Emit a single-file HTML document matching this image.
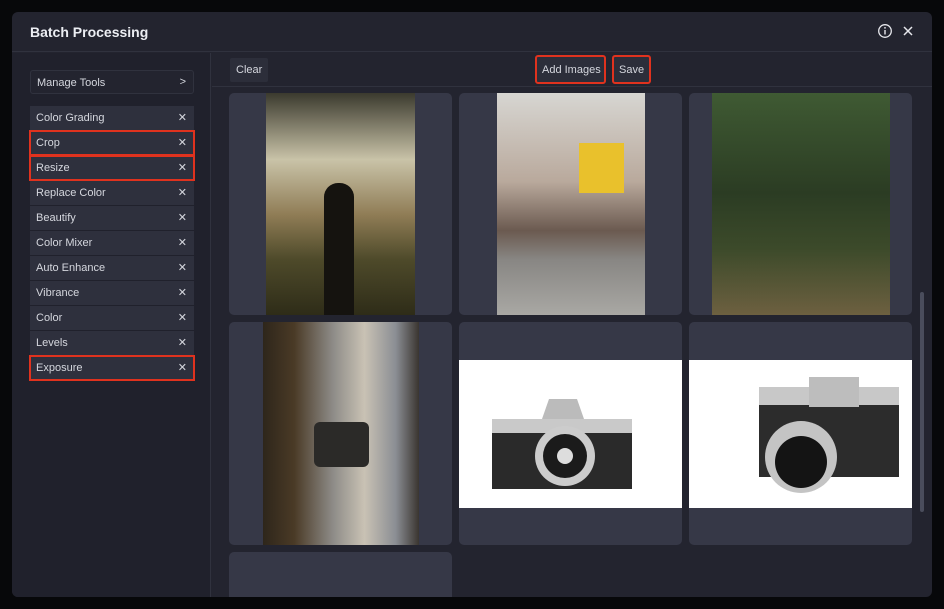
<!DOCTYPE html>
<html><head><meta charset="utf-8"><style>
*{box-sizing:border-box;margin:0;padding:0}
body{width:944px;height:609px;background:#07080a;font-family:"Liberation Sans",sans-serif;position:relative;overflow:hidden;color:#d8d9e0}
.modal{position:absolute;left:12px;top:12px;width:920px;height:585px;background:#23242f;border-radius:6px;overflow:hidden}
.hdr{position:absolute;left:0;top:0;width:920px;height:40px;border-bottom:1px solid #30323e}
.title{position:absolute;left:18px;top:12px;font-size:14px;font-weight:bold;color:#eceef3}
.side{position:absolute;left:0;top:41px;width:199px;height:544px;background:#20212c;border-right:1px solid #30323e}
.item{position:absolute;left:18px;width:164px;height:24px;background:#2e303d;font-size:11px;color:#d5d7de;padding:6px 0 0 6px;white-space:nowrap}
.item .x{position:absolute;right:7px;top:5px;font-size:11px}
.red{outline:2px solid #e0321e;outline-offset:-1px}
.mg{border:1px solid #30323e;background:#23242f;border-radius:3px}
.main{position:absolute;left:200px;top:41px;width:720px;height:544px}
.bar{position:absolute;left:0;top:0;width:720px;height:34px;border-bottom:1px solid #30323e}
.btn{position:absolute;top:5px;height:24px;background:#2c2e3a;font-size:11px;color:#d5d7de;padding:6px 6px 0;border-radius:2px;white-space:nowrap}
.card{position:absolute;width:223px;height:222px;background:#363847;border-radius:5px;overflow:hidden}
.ph{position:absolute}
.sb{position:absolute;left:708px;top:239px;width:4px;height:220px;background:#4a4d5c;border-radius:2px}
</style></head><body>
<div class="modal">
 <div class="hdr"><div class="title">Batch Processing</div>
  <svg style="position:absolute;left:865px;top:11px" width="16" height="16" viewBox="0 0 16 16"><circle cx="8" cy="8" r="6.3" fill="none" stroke="#e6e7ec" stroke-width="1.3"/><line x1="8" y1="7" x2="8" y2="11.5" stroke="#e6e7ec" stroke-width="1.4"/><circle cx="8" cy="4.9" r="0.9" fill="#e6e7ec"/></svg>
  <svg style="position:absolute;left:890px;top:13px" width="12" height="12" viewBox="0 0 12 12"><path d="M2 2L10 10M10 2L2 10" stroke="#e6e7ec" stroke-width="1.5"/></svg>
 </div>
 <div class="side">
  <div class="item mg" style="top:17px;height:24px;padding:6px 0 0 6px">Manage Tools<span class="x" style="top:5px">&gt;</span></div>
  <div class="item" style="top:53px">Color Grading<span class="x">✕</span></div>
  <div class="item red" style="top:78px">Crop<span class="x">✕</span></div>
  <div class="item red" style="top:103px">Resize<span class="x">✕</span></div>
  <div class="item" style="top:128px">Replace Color<span class="x">✕</span></div>
  <div class="item" style="top:153px">Beautify<span class="x">✕</span></div>
  <div class="item" style="top:178px">Color Mixer<span class="x">✕</span></div>
  <div class="item" style="top:203px">Auto Enhance<span class="x">✕</span></div>
  <div class="item" style="top:228px">Vibrance<span class="x">✕</span></div>
  <div class="item" style="top:253px">Color<span class="x">✕</span></div>
  <div class="item" style="top:278px">Levels<span class="x">✕</span></div>
  <div class="item red" style="top:303px">Exposure<span class="x">✕</span></div>
 </div>
 <div class="main">
  <div class="bar">
   <div class="btn" style="left:18px">Clear</div>
   <div class="btn red" style="left:324px;width:69px;top:3px;height:27px;padding-top:8px">Add Images</div>
   <div class="btn red" style="left:401px;width:37px;top:3px;height:27px;padding-top:8px">Save</div>
  </div>
  <div class="card" style="left:17px;top:40px">
   <div class="ph" style="left:37px;top:0;width:149px;height:222px;background:linear-gradient(180deg,#3b3a2e 0%,#c9c3a8 30%,#8f7c55 55%,#4e4a2a 75%,#2e2c18 100%)"></div>
   <div class="ph" style="left:95px;top:90px;width:30px;height:132px;background:#15130f;border-radius:14px 14px 0 0"></div>
  </div>
  <div class="card" style="left:247px;top:40px">
   <div class="ph" style="left:38px;top:0;width:148px;height:222px;background:linear-gradient(180deg,#d7d6d2 0%,#b9a99c 40%,#6b5a50 62%,#888683 75%,#a9a8a4 100%)"></div>
   <div class="ph" style="left:120px;top:50px;width:45px;height:50px;background:#e9c12c"></div>
  </div>
  <div class="card" style="left:477px;top:40px">
   <div class="ph" style="left:23px;top:0;width:178px;height:222px;background:linear-gradient(180deg,#3f5a33 0%,#2b3c23 45%,#3c4a2a 70%,#6d6040 100%)"></div>
  </div>
  <div class="card" style="left:17px;top:269px;height:223px">
   <div class="ph" style="left:34px;top:0;width:156px;height:223px;background:linear-gradient(90deg,#2e261b 0%,#4a3a26 20%,#8e8c88 45%,#c9c2b4 65%,#8b8e94 85%,#3a3530 100%)"></div>
   <div class="ph" style="left:85px;top:100px;width:55px;height:45px;background:#2b2a28;border-radius:6px"></div>
  </div>
  <div class="card" style="left:247px;top:269px;height:223px">
   <div class="ph" style="left:0;top:38px;width:223px;height:148px;background:#fff"></div>
   <svg class="ph" style="left:28px;top:72px" width="150" height="100" viewBox="0 0 150 100"><rect x="5" y="30" width="140" height="65" fill="#2a2a2a"/><rect x="5" y="25" width="140" height="14" fill="#c9c9c9"/><path d="M55 25L62 5H90L97 25Z" fill="#bbb"/><circle cx="78" cy="62" r="30" fill="#ccc"/><circle cx="78" cy="62" r="22" fill="#1b1b1b"/><circle cx="78" cy="62" r="8" fill="#ddd"/></svg>
  </div>
  <div class="card" style="left:477px;top:269px;height:223px">
   <div class="ph" style="left:0;top:38px;width:223px;height:148px;background:#fff"></div>
   <svg class="ph" style="left:60px;top:45px" width="160" height="140" viewBox="0 0 160 140"><rect x="10" y="30" width="140" height="80" fill="#2c2c2c"/><rect x="10" y="20" width="140" height="18" fill="#c8c8c8"/><rect x="60" y="10" width="50" height="30" fill="#bdbdbd"/><circle cx="52" cy="90" r="36" fill="#c4c4c4"/><circle cx="52" cy="95" r="26" fill="#141414"/></svg>
  </div>
  <div class="card" style="left:17px;top:499px;height:60px"></div>
  <div class="sb"></div>
 </div>
</div>
</body></html>
